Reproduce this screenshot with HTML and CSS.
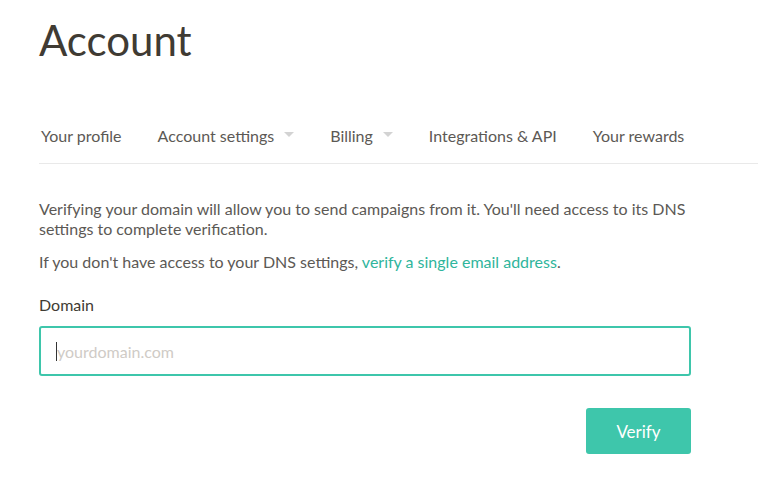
FILE: index.html
```html
<!DOCTYPE html>
<html>
<head>
<meta charset="utf-8">
<link rel="stylesheet" href="styles.css">
</head>
<body>
<div class="page">
  <h1 class="title">Account</h1>
  <nav class="tabs">
    <a class="tab">Your profile</a>
    <a class="tab">Account settings<span class="caret"></span></a>
    <a class="tab">Billing<span class="caret"></span></a>
    <a class="tab">Integrations &amp; API</a>
    <a class="tab">Your rewards</a>
  </nav>
  <div class="content">
    <p class="para">Verifying your domain will allow you to send campaigns from it. You'll need access to its DNS settings to complete verification.</p>
    <p class="para second">If you don't have access to your DNS settings, <a class="link">verify a single email address</a>.</p>
    <label class="label">Domain</label>
    <div class="input"><span class="cursor"></span><span class="placeholder">yourdomain.com</span></div>
    <div class="actions"><button class="btn">Verify</button></div>
  </div>
</div>
</body>
</html>
```
FILE: styles.css
```css
html, body {
  margin: 0;
  padding: 0;
  background: #fff;
}
body {
  font-family: Lato, "Open Sans", sans-serif;
  color: #5c5955;
}
.page {
  padding: 12px 0 0 39px;
}
.title {
  margin: 0;
  font-size: 42px;
  font-weight: 400;
  color: #403b33;
  line-height: 56px;
}
.tabs {
  display: flex;
  margin-top: 50px;
  border-bottom: 1px solid #e9e9e9;
  padding-left: 2px;
  height: 46px;
  box-sizing: border-box;
  align-items: flex-start;
}
.tab {
  font-size: 16px;
  color: #5c5955;
  margin-right: 36px;
  line-height: 20px;
  padding-top: 8px;
  display: flex;
  align-items: center;
}
.caret {
  display: inline-block;
  width: 0;
  height: 0;
  border-left: 5px solid transparent;
  border-right: 5px solid transparent;
  border-top: 5px solid #d3d3d3;
  margin-left: 10px;
  margin-top: -3px;
}
.content {
  width: 652px;
  padding-top: 35px;
}
.para {
  margin: 0;
  width: 672px;
  font-size: 16px;
  line-height: 20px;
  color: #5c5955;
}
.para.second {
  margin-top: 13px;
}
.link {
  color: #2fb59c;
}
.label {
  display: block;
  margin-top: 23px;
  font-size: 16px;
  color: #403b33;
  line-height: 20px;
}
.input {
  margin-top: 11px;
  height: 50px;
  box-sizing: border-box;
  border: 2px solid #3ec6ab;
  border-radius: 3px;
  display: flex;
  align-items: center;
  padding-left: 15px;
}
.cursor {
  width: 1px;
  height: 19px;
  background: #333;
}
.placeholder {
  font-size: 16px;
  color: #cfcbc6;
}
.actions {
  display: flex;
  justify-content: flex-end;
  margin-top: 32px;
}
.btn {
  width: 105px;
  height: 46px;
  border: none;
  border-radius: 3px;
  background: #3ec6ab;
  color: #fff;
  font-family: Lato, sans-serif;
  font-size: 17px;
}
```
